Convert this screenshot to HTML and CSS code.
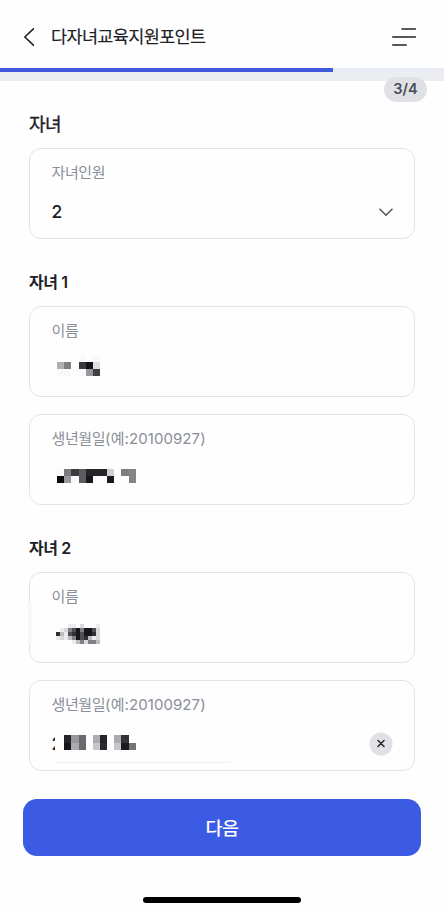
FILE: index.html
```html
<!DOCTYPE html>
<html lang="ko">
<head>
<meta charset="utf-8">
<title>다자녀교육지원포인트</title>
<link rel="stylesheet" href="styles.css">
</head>
<body>
<div class="app">
  <header class="header">
    <svg class="back" width="12" height="20" viewBox="0 0 12 20"><path d="M10.4 1.8 1.8 10l8.6 8.2"/></svg>
    <h1 class="title">다자녀교육지원포인트</h1>
    <svg class="menu" width="26" height="20" viewBox="0 0 26 20"><path d="M11 2h13.4M1.8 10h22.6M1.8 18h13.4"/></svg>
  </header>
  <div class="progress"><div class="progress-fill"></div></div>
  <div class="band"><span class="step">3/4</span></div>
  <main class="form">
    <h2 class="heading">자녀</h2>
    <div class="field">
      <span class="label">자녀인원</span>
      <div class="row"><span class="value">2</span>
        <svg class="chevron" width="14" height="9" viewBox="0 0 14 9"><path d="M1 1.2l6 6 6-6"/></svg>
      </div>
    </div>
    <h3 class="subheading">자녀 1</h3>
    <div class="field">
      <span class="label">이름</span>
      <svg class="mask" width="100" height="28" viewBox="52 355 100 28" shape-rendering="crispEdges">
        <path fill="#b0b0b2" d="M57 362h7v7h-7z"/><path fill="#808082" d="M64 362h7v7h-7z"/><path fill="#f9f9fc" d="M57 369h14v7H57zM79 369h7v7h-7zM79 355h7v7h-7zM93 355h7v7h-7z"/><path fill="#3a3a3d" d="M79 362h7v7h-7z"/><path fill="#131316" d="M86 362h7v7h-7z"/><path fill="#dfdfe3" d="M93 362h7v7h-7z"/><path fill="#98989a" d="M86 369h7v7h-7z"/><path fill="#404042" d="M93 369h7v7h-7z"/>
      </svg>
    </div>
    <div class="field">
      <span class="label">생년월일<span class="hint">(예:20100927)</span></span>
      <svg class="mask" width="100" height="28" viewBox="52 463 100 28" shape-rendering="crispEdges">
        <path fill="#fafafc" d="M57 469h7v7h-7zM71 476h8v7h-8z"/><path fill="#7c7c80" d="M64 469h7v7h-7zM121 469h8v7h-8z"/><path fill="#3c3c40" d="M71 469h8v7h-8z"/><path fill="#5c5c60" d="M79 469h7v14h-7z"/><path fill="#252529" d="M86 469h21v7H86z"/><path fill="#cfcfd4" d="M107 469h7v7h-7z"/><path fill="#858588" d="M129 469h7v14h-7z"/><path fill="#0a0a0b" d="M57 476h7v7h-7z"/><path fill="#98989b" d="M64 476h7v7h-7z"/><path fill="#19191b" d="M86 476h7v7h-7zM107 476h7v7h-7z"/>
      </svg>
    </div>
    <h3 class="subheading">자녀 2</h3>
    <div class="field faded-edge">
      <span class="label">이름</span>
      <svg class="mask" width="100" height="28" viewBox="52 621 100 28" shape-rendering="crispEdges">
        <path fill="#ebebee" d="M68 624h8v4h-8zM60 628h4v4h-4zM64 632h4v4h-4zM56 636h4v4h-4zM64 636h4v4h-4zM92 636h4v4h-4zM72 640h4v4h-4zM96 624h4v4h-4z"/>
        <path fill="#d8d8dc" d="M80 624h4v4h-4zM64 628h4v4h-4zM96 628h4v12h-4zM60 636h4v4h-4zM84 640h4v4h-4z"/>
        <path fill="#bcbcc0" d="M60 632h4v4h-4zM68 636h4v4h-4zM88 636h4v4h-4zM76 640h4v4h-4zM96 640h4v4h-4z"/>
        <path fill="#808084" d="M68 628h4v4h-4zM80 628h4v4h-4zM72 636h4v4h-4zM80 640h4v4h-4zM88 640h8v4h-8z"/>
        <path fill="#505054" d="M72 628h4v4h-4zM92 628h4v4h-4zM68 632h4v4h-4zM80 632h4v8h-4z"/>
        <path fill="#303034" d="M56 632h4v4h-4zM72 632h4v4h-4zM92 632h4v4h-4zM84 636h4v4h-4z"/>
        <path fill="#17171a" d="M76 628h4v12h-4zM84 628h8v8h-8z"/>
      </svg>
    </div>
    <div class="field">
      <span class="label">생년월일<span class="hint">(예:20100927)</span></span>
      <div class="row">
        <span class="value">2</span>
        <svg class="mask-inline" width="81" height="28" viewBox="55 728 81 28" shape-rendering="crispEdges">
          <path fill="#252528" d="M64 733h7v8h-7zM100 733h7v8h-7z"/><path fill="#98989c" d="M71 733h8v8h-8z"/><path fill="#69696e" d="M79 733h7v15h-7z"/><path fill="#acacb0" d="M93 733h7v8h-7zM71 741h8v7h-8zM114 733h7v8h-7z"/><path fill="#333338" d="M121 733h8v8h-8z"/><path fill="#161618" d="M64 741h7v7h-7z"/><path fill="#c6c6cb" d="M93 741h7v7h-7zM114 741h7v7h-7z"/><path fill="#2c2c30" d="M100 741h7v7h-7z"/><path fill="#1c1c20" d="M121 741h8v7h-8z"/><path fill="#747477" d="M129 741h7v7h-7z"/>
        </svg>
        <svg class="clear" width="24" height="24" viewBox="0 0 24 24"><circle cx="12" cy="12" r="11.5"/><path d="M9 8.5l6 6M15 8.5l-6 6"/></svg>
      </div>
      <div class="underline"></div>
    </div>
  </main>
  <button class="next" type="button">다음</button>
  <div class="home-bar"></div>
</div>
</body>
</html>
```
FILE: styles.css
```css
* { box-sizing: border-box; margin: 0; }
body { background: #fefefe; color: #202127; font-family: Inter, "Noto Sans CJK KR", sans-serif; }
svg { display: block; flex: none; }
svg path { stroke-linecap: round; stroke-linejoin: round; }
.app { width: 444px; height: 912px; overflow: hidden; display: flex; flex-direction: column; }
.header { height: 68px; padding: 6px 27px 0 23px; display: flex; align-items: center; flex: none; }
.back path, .menu path { fill: none; stroke: #202127; stroke-width: 1.6; }
.title { margin-left: 16px; font-size: 17.5px; line-height: 24px; font-weight: 400; -webkit-text-stroke: .15px; letter-spacing: -.65px; white-space: nowrap; }
.menu { margin-left: auto; }
.progress { height: 4px; background: #e9ebf7; flex: none; }
.progress-fill { width: 75%; height: 100%; background: #3e59dc; }
.band { height: 9px; background: #ebedf0; flex: none; display: flex; justify-content: flex-end; align-items: flex-start; padding: 5px 17px 0 0; }
.step { width: 43px; height: 25px; border-radius: 13px; background: #dfe1e6; color: #484c55; font-size: 14.5px; font-weight: 600; line-height: 24px; text-align: center; flex: none; }
.form { padding: 0 29px; flex: none; }
.heading { margin-top: 32px; height: 24px; line-height: 24px; font-size: 18px; font-weight: 400; -webkit-text-stroke: .35px; letter-spacing: -.5px; }
.subheading { margin: 31px 0 12px; height: 24px; line-height: 24px; font-size: 16px; font-weight: 600; letter-spacing: -.4px; }
.field { height: 91px; border: 1px solid #e2e4e8; border-radius: 12px; padding: 12px 21px 0 22px; }
.heading + .field { margin-top: 11px; }
.field + .field { margin-top: 17px; }
.label { display: block; height: 24px; margin-left: -.5px; line-height: 24px; font-size: 15px; letter-spacing: -.4px; color: #8a8e98; white-space: nowrap; }
.hint { letter-spacing: .08px; }
.row { height: 28px; margin-top: 13px; display: flex; align-items: center; }
.value { font-size: 17.5px; line-height: 28px; font-weight: 500; width: 12px; margin-left: -.5px; flex: none; }
.chevron { margin-left: auto; }
.chevron path { fill: none; stroke: #555a63; stroke-width: 1.6; }
.mask { margin-top: 12px; }
.mask-inline { margin-left: -8.5px; background: #fefefe; position: relative; }
.faded-edge { position: relative; }
.faded-edge::before { content: ""; position: absolute; left: -2px; top: 30px; width: 4px; height: 41px; background: #f8f8fa; }
.clear { margin-left: auto; }
.clear circle { fill: #dfe1e6; }
.clear path { fill: none; stroke: #25272d; stroke-width: 1.5; }
.underline { width: 175px; height: 1px; margin: 4px 0 0 3px; background: #eeeff1; }
.next { flex: none; width: 398px; height: 57px; margin: 28px 23px 0; border: 0; border-radius: 14px; background: #3b5be5; color: #fff; font: 500 18.5px/57px Inter, "Noto Sans CJK KR", sans-serif; letter-spacing: -.4px; }
.home-bar { flex: none; width: 158px; height: 6px; margin: 41px auto 0; border-radius: 3px; background: #000; }
```
